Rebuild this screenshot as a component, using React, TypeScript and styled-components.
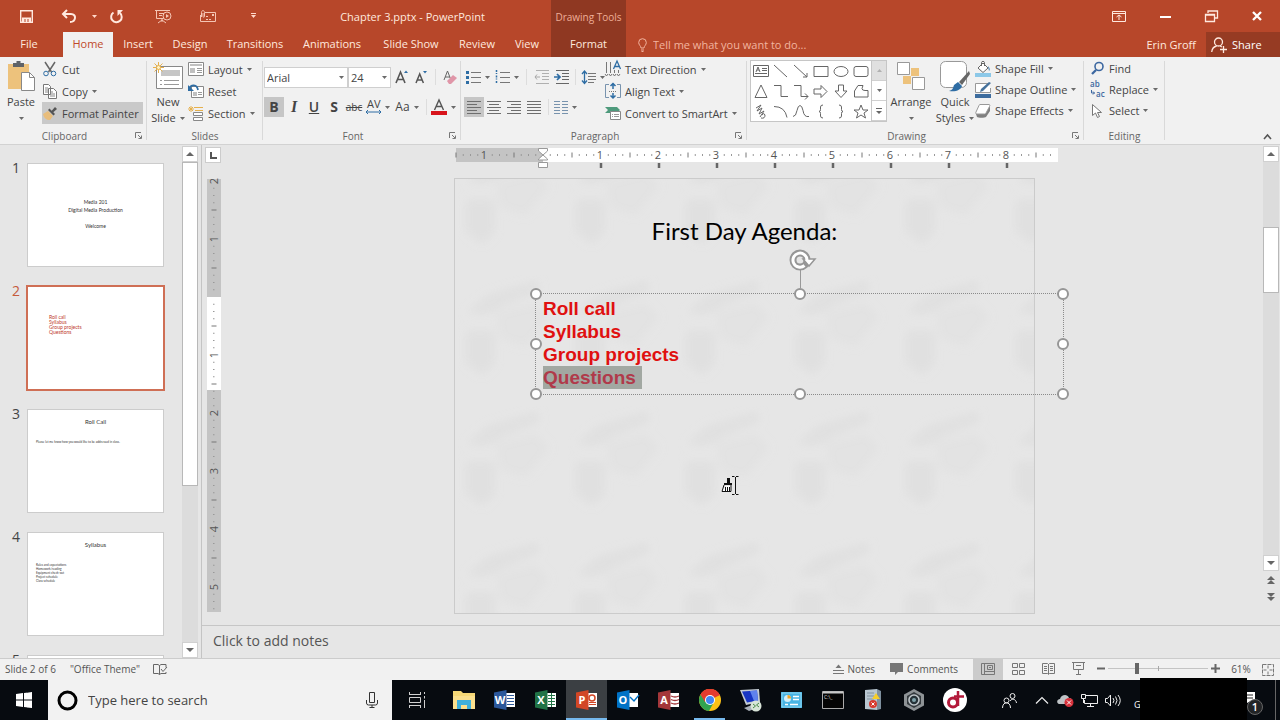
import { FC, ReactNode } from 'react';
import styled, { createGlobalStyle, css } from 'styled-components';

const GlobalStyle = createGlobalStyle`
  * { box-sizing: border-box; }
  body {
    margin: 0;
    font-family: 'Open Sans', 'Noto Sans', sans-serif;
    font-size: 11px;
    color: #444444;
    background: #e6e6e6;
  }
  button, input, select {
    font: inherit;
    color: inherit;
    margin: 0;
    padding: 0;
    border: 0;
    background: none;
  }
`;

const App = styled.div`
  display: flex;
  flex-direction: column;
  height: 100vh;
  min-width: 1200px;
  overflow: hidden;
`;

const Svg = styled.svg`
  display: block;
  flex: none;
  fill: none;
  stroke-width: 1;
  overflow: visible;
`;

interface IconProps {
  w: number;
  h: number;
  children: ReactNode;
}

const Icon: FC<IconProps> = ({ w, h, children }) => (
  <Svg width={w} height={h} viewBox={`0 0 ${w} ${h}`} aria-hidden="true">
    {children}
  </Svg>
);

const Caret: FC<{ color?: string }> = ({ color = '#6a6a6a' }) => (
  <Icon w={5} h={3}>
    <path d="M0 0h5L2.500 3z" fill={color} />
  </Icon>
);

/* ---------- header ---------- */

const Header = styled.header`
  display: flex;
  flex: none;
  height: 57px;
  background: #b7472a;
  color: #ffe9df;
`;
const HeaderLeft = styled.div`
  width: 551px;
`;
const HeaderRight = styled.div`
  flex: 1;
`;
const TitleRow = styled.div`
  display: flex;
  align-items: center;
  height: 32px;
`;
const QuickAccess = styled.div`
  display: grid;
  grid-template-columns: 52px 34px 17px 27px 66px 24px 66px;
  align-items: center;
  height: 32px;
`;
const BarButton = styled.button`
  display: flex;
  align-items: center;
  justify-content: center;
  height: 30px;
`;
const DocTitle = styled.div`
  flex: 1;
  padding-right: 12px;
  text-align: center;
`;
const TabRow = styled.nav`
  display: grid;
  grid-template-columns: 63px 50px 50px 54px 76px 78px 80px 52px 48px;
  height: 25px;
`;
const Tab = styled.button<{ $active?: boolean }>`
  height: 25px;
  padding-bottom: 2px;
  line-height: 23px;
  ${(p) => p.$active && css`
    background: #f1f1f1;
    color: #c0492b;
  `}
`;
const FileTab = styled(Tab)`
  padding-right: 5px;
`;
const ContextTab = styled.div`
  width: 75px;
  display: flex;
  flex-direction: column;
  background: #8f3822;
  text-align: center;
`;
const ContextLabel = styled.div`
  height: 32px;
  line-height: 34px;
  font-size: 10px;
  color: #eeae98;
  white-space: nowrap;
`;
const WindowControls = styled(TitleRow)`
  justify-content: flex-end;
`;
const WindowButton = styled(BarButton)`
  width: 46px;
`;
const TellRow = styled.div`
  display: flex;
  align-items: center;
  height: 25px;
`;
const TellMe = styled.label`
  display: flex;
  flex: 1;
  align-items: center;
  gap: 6px;
  padding-left: 12px;
`;
const TellInput = styled.input`
  flex: 1;
  outline: none;
  &::placeholder {
    color: #f2b49f;
    opacity: 1;
  }
`;
const UserName = styled.button`
  padding-right: 10px;
`;
const Share = styled.button`
  display: flex;
  align-items: center;
  gap: 5px;
  width: 74px;
  height: 25px;
  padding-left: 5px;
  background: #963b23;
  color: #ffffff;
`;

/* ---------- ribbon ---------- */

const Ribbon = styled.section`
  display: flex;
  flex: none;
  height: 88px;
  background: #f1f1f1;
  border-bottom: 1px solid #d2d2d2;
`;
const Group = styled.div<{ $w?: number }>`
  display: flex;
  flex-direction: column;
  ${(p) => (p.$w ? css`width: ${p.$w}px;` : css`flex: 1;`)}
`;
const GroupBody = styled.div<{ $pad?: number }>`
  display: flex;
  height: 70px;
  padding-top: 1px;
  padding-left: ${(p) => p.$pad ?? 0}px;
`;
const GroupFooter = styled.div<{ $launcher?: boolean }>`
  display: grid;
  grid-template-columns: ${(p) => (p.$launcher ? '1fr 18px' : '1fr')};
  align-items: center;
  justify-items: center;
  height: 17px;
  font-size: 10px;
  color: #666666;
`;
const GroupLine = styled.div`
  width: 1px;
  margin: 4px 0 4px -1px;
  background: #d9d9d9;
`;
const Column = styled.div`
  display: flex;
  flex-direction: column;
  align-items: flex-start;
`;
const BigButton = styled.button<{ $w: number }>`
  display: grid;
  grid-template-rows: 36px 16px 16px;
  align-items: center;
  justify-items: center;
  width: ${(p) => p.$w}px;
  height: 68px;
  line-height: 16px;
`;
const WithCaret = styled.span`
  display: flex;
  align-items: center;
  gap: 4px;
`;
const SmallButton = styled.button<{ $active?: boolean; $tight?: boolean }>`
  display: flex;
  align-items: center;
  gap: 4px;
  height: ${(p) => (p.$tight ? 21 : 22)}px;
  padding-right: 4px;
  white-space: nowrap;
  background: ${(p) => (p.$active ? '#c9c9c9' : 'none')};
`;
const IconSlot = styled.span<{ $w?: number }>`
  display: flex;
  justify-content: center;
  width: ${(p) => p.$w ?? 16}px;
`;
const Tools = styled.div`
  display: flex;
  flex-direction: column;
  gap: 10px;
  padding-top: 9px;
`;
const ToolRow = styled.div`
  display: flex;
  align-items: center;
  height: 20px;
`;
const Tool = styled.button<{ $w?: number; $active?: boolean }>`
  display: flex;
  align-items: center;
  justify-content: center;
  gap: 4px;
  flex: none;
  width: ${(p) => p.$w ?? 20}px;
  height: 20px;
  font-size: 12px;
  line-height: 20px;
  background: ${(p) => (p.$active ? '#c6c6c6' : 'none')};
`;
const Strong = styled.span`
  font-size: 14px;
  font-weight: 700;
`;
const Italic = styled.span`
  font-family: 'Liberation Serif', serif;
  font-size: 16px;
  font-style: italic;
  font-weight: 700;
`;
const Underline = styled(Strong)`
  font-weight: 600;
  text-decoration: underline;
`;
const Strike = styled.span`
  font-size: 10px;
  text-decoration: line-through;
`;
const ToolLine = styled.div`
  width: 1px;
  height: 16px;
  margin: 0 4px;
  background: #dddddd;
`;
const SelectBox = styled.div<{ $w: number }>`
  display: grid;
  grid-template-columns: 1fr 8px;
  align-items: center;
  width: ${(p) => p.$w}px;
  height: 21px;
  background: #ffffff;
  border: 1px solid #cfcfcf;
`;
const Select = styled.select`
  appearance: none;
  outline: none;
  width: 100%;
  padding-left: 2px;
  grid-row: 1;
  grid-column: 1 / 3;
`;
const SelectArrow = styled.span`
  grid-row: 1;
  grid-column: 2;
  pointer-events: none;
`;
const Gallery = styled.div`
  display: flex;
  width: 137px;
  height: 62px;
  margin: 2px 0 0 3px;
  background: #ffffff;
  border: 1px solid #c6c6c6;
`;
const ShapeGrid = styled.div`
  display: grid;
  grid-template-columns: repeat(6, 20px);
  grid-template-rows: repeat(3, 20px);
  flex: 1;
`;
const ShapeButton = styled.button`
  display: flex;
  align-items: center;
  justify-content: center;
`;
const GalleryScroll = styled.div`
  display: grid;
  grid-template-rows: repeat(3, 20px);
  width: 15px;
  border-left: 1px solid #c6c6c6;
`;
const GalleryButton = styled.button<{ $off?: boolean }>`
  display: flex;
  align-items: center;
  justify-content: center;
  background: ${(p) => (p.$off ? '#e0e0e0' : '#ffffff')};
  border-bottom: 1px solid #d0d0d0;
`;
const Collapse = styled.button`
  align-self: flex-end;
  margin-right: 8px;
`;

/* ---------- workspace ---------- */

const Workspace = styled.main`
  display: flex;
  flex: 1;
  min-height: 0;
`;
const SlidePane = styled.aside`
  display: flex;
  width: 202px;
  padding-right: 2px;
  border-right: 1px solid #c4c4c4;
`;
const SlideList = styled.ol`
  flex: 1;
  margin: 0;
  padding: 18px 0 0;
  list-style: none;
  overflow: hidden;
`;
const SlideItem = styled.li<{ $active?: boolean }>`
  display: grid;
  grid-template-columns: 27px 137px;
  height: 123px;
  font-size: 14px;
  line-height: 10px;
  color: ${(p) => (p.$active ? '#c55a3a' : '#444444')};
`;
const SlideNumber = styled.span`
  padding: 0 7px 0 0;
  text-align: right;
`;
const Thumb = styled.button<{ $active?: boolean }>`
  display: flex;
  flex-direction: column;
  height: 104px;
  background: #ffffff;
  outline: ${(p) => (p.$active ? '2px solid #cf6f55' : '1px solid #cccccc')};
  outline-offset: -1px;
  font-family: Lato, sans-serif;
  color: #333333;
`;
const CoverText = styled.span`
  width: 100%;
  padding-top: 35px;
  font-size: 5px;
  line-height: 8px;
  text-align: center;
`;
const RedText = styled.span`
  padding: 29px 0 0 22px;
  font-size: 5px;
  line-height: 5px;
  text-align: left;
  color: #c0392b;
`;
const ThumbTitle = styled.span`
  width: 100%;
  height: 30px;
  padding-top: 9px;
  font-size: 6px;
  line-height: 8px;
  text-align: center;
`;
const ThumbBody = styled.span`
  padding: 1px 0 0 9px;
  font-size: 3px;
  line-height: 4px;
  text-align: left;
`;
const ScrollBar = styled.div`
  display: flex;
  flex-direction: column;
  align-items: center;
  width: 18px;
  padding-top: 1px;
`;
const ScrollButton = styled.button`
  display: flex;
  align-items: center;
  justify-content: center;
  flex: none;
  width: 16px;
  height: 16px;
  background: #ffffff;
  border: 1px solid #d0d0d0;
`;
const Track = styled.div<{ $top: number }>`
  flex: 1;
  width: 16px;
  padding-top: ${(p) => p.$top}px;
  background: #dcdcdc;
`;
const TrackThumb = styled.div<{ $h: number }>`
  height: ${(p) => p.$h}px;
  background: #ffffff;
  border: 1px solid #b8b8b8;
`;
const PageButtons = styled.div`
  display: flex;
  flex-direction: column;
  align-items: center;
  height: 54px;
`;
const PageButton = styled.button`
  display: flex;
  align-items: center;
  height: 17px;
`;
const Editor = styled.div`
  display: flex;
  flex-direction: column;
  flex: 1;
  min-width: 0;
`;
const EditArea = styled.div`
  display: flex;
  flex: 1;
  min-height: 0;
`;
const RulerColumn = styled.div`
  display: flex;
  flex-direction: column;
  gap: 16px;
  width: 25px;
  padding: 2px 0 0 3px;
`;
const TabSelector = styled.button`
  display: flex;
  align-items: center;
  justify-content: center;
  width: 16px;
  height: 16px;
  background: #ffffff;
  border: 1px solid #cccccc;
`;
const VRulerBox = styled.div`
  padding-left: 2px;
`;
const Canvas = styled.div`
  display: flex;
  flex: 1;
  justify-content: center;
  padding-top: 3px;
`;
const CanvasInner = styled.div`
  width: 581px;
`;
const HRulerBox = styled.div`
  height: 30px;
  padding-left: 2px;
`;
const Slide = styled.div`
  position: relative;
  height: 436px;
  border: 1px solid #cbcbcb;
`;
const Watermark = styled.div`
  height: 434px;
  overflow: hidden;
`;
const SlideTitle = styled.h1`
  position: absolute;
  top: 37px;
  left: 0;
  right: 0;
  margin: 0;
  font-family: Lato, sans-serif;
  font-size: 24px;
  font-weight: 400;
  line-height: 30px;
  text-align: center;
  color: #000000;
`;
const TextBox = styled.div`
  position: absolute;
  top: 114px;
  left: 80px;
  width: 529px;
  height: 102px;
  padding: 3px 7px;
  font-family: 'Liberation Sans', Arial, sans-serif;
  font-size: 19px;
  font-weight: 700;
  line-height: 23px;
  color: #e01010;
  border: 1px dotted #8a8a8a;
`;
const Line = styled.div``;
const Selected = styled.span`
  display: inline-block;
  height: 23px;
  padding-right: 6px;
  background: #a2a8a2;
  color: #b03a4a;
`;
const Handle = styled.span<{ $x: number; $y: number }>`
  position: absolute;
  left: ${(p) => p.$x}%;
  top: ${(p) => p.$y}%;
  width: 12px;
  height: 12px;
  margin: -6px;
  background: #ffffff;
  border: 2px solid #969696;
  border-radius: 50%;
`;
const RotateHandle = styled.span`
  position: absolute;
  left: 50%;
  top: -45px;
  margin-left: -11px;
`;
const PainterCursor = styled.span`
  position: absolute;
  left: 266px;
  top: 297px;
`;
const Notes = styled.div`
  height: 33px;
  padding-left: 11px;
  border-top: 1px solid #c6c6c6;
  font-size: 14px;
  line-height: 30px;
  color: #555555;
`;

/* ---------- status bar ---------- */

const StatusBar = styled.footer`
  display: flex;
  align-items: center;
  flex: none;
  height: 22px;
  font-size: 10px;
  line-height: 14px;
  color: #555555;
  background: #f1f1f1;
  border-top: 1px solid #cccccc;
`;
const StatusText = styled.span`
  padding: 0 0 2px 5px;
  margin-right: 9px;
`;
const Spacer = styled.div`
  flex: 1;
`;
const StatusButton = styled.button`
  display: flex;
  align-items: center;
  gap: 4px;
  margin-right: 15px;
  padding-bottom: 2px;
`;
const SpellingButton = styled(StatusButton)`
  margin-left: 4px;
`;
const ViewButton = styled.button<{ $active?: boolean }>`
  display: flex;
  align-items: center;
  justify-content: center;
  width: 30px;
  height: 21px;
  padding-bottom: 2px;
  background: ${(p) => (p.$active ? '#cbcbcb' : 'none')};
`;
const Zoom = styled.div`
  display: flex;
  align-items: center;
  gap: 3px;
  margin-left: 4px;
  padding-bottom: 2px;
`;
const ZoomSlider = styled.input`
  appearance: none;
  width: 100px;
  height: 11px;
  background:
    linear-gradient(#a8a8a8, #a8a8a8) 50% 50% / 1px 5px no-repeat,
    linear-gradient(#c4c4c4, #c4c4c4) 0 50% / 100% 1px no-repeat;
  &::-webkit-slider-thumb {
    appearance: none;
    width: 4px;
    height: 11px;
    background: #666666;
  }
`;
const ZoomValue = styled.button`
  width: 42px;
  padding-bottom: 2px;
`;
const FitButton = styled.button`
  padding-right: 6px;
`;

/* ---------- taskbar ---------- */

const Taskbar = styled.footer`
  position: relative;
  display: flex;
  flex: none;
  height: 40px;
  background: #070b10;
  color: #ffffff;
`;
const TaskButton = styled.button<{ $w?: number; $state?: 'active' | 'open' }>`
  display: flex;
  align-items: center;
  justify-content: center;
  width: ${(p) => p.$w ?? 41}px;
  height: 40px;
  background: ${(p) => (p.$state === 'active' ? '#3b3f43' : 'none')};
  box-shadow: ${(p) => (p.$state === 'active' ? 'inset 0 -2px 0 #76b9ed' : 'none')};
  ${(p) => p.$state === 'open' && css`
    background: linear-gradient(#76b9ed, #76b9ed) 50% 100% / 31px 2px no-repeat;
  `}
`;
const Search = styled.label`
  display: flex;
  align-items: center;
  gap: 10px;
  width: 344px;
  padding: 0 14px 0 9px;
  background: #f2f2f2;
`;
const SearchInput = styled.input`
  flex: 1;
  outline: none;
  font-size: 13px;
  &::placeholder {
    color: #444444;
    opacity: 1;
  }
`;
const ClockButton = styled(TaskButton)`
  justify-content: flex-start;
  padding: 8px 0 0 9px;
  font-size: 9px;
`;
const Redacted = styled.div`
  position: absolute;
  top: -2px;
  right: 33px;
  width: 107px;
  height: 42px;
  background: #000000;
`;
const Tray = styled.div`
  display: flex;
  align-items: center;
`;
const TrayEnd = styled.button`
  width: 5px;
  height: 40px;
  border-left: 1px solid #666666;
`;
const Badge = styled.span`
  position: absolute;
  right: 17px;
  top: 19px;
  width: 16px;
  height: 16px;
  border: 1px solid #666666;
  border-radius: 50%;
  background: #222426;
  font-size: 11px;
  font-weight: 600;
  line-height: 14px;
  text-align: center;
`;
const ActionCenter = styled(TaskButton)`
  justify-content: flex-start;
  padding-bottom: 6px;
`;

const Launcher = () => (
  <button aria-label="More options">
    <Icon w={7} h={7}>
      <path d="M.500 6V.500H6M3 3l3 3M6.500 3.500v3h-3" stroke="#777" />
    </Icon>
  </button>
);

interface RibbonGroupProps {
  name: string;
  width: number;
  pad?: number;
  launcher?: boolean;
  children: ReactNode;
}

const RibbonGroup: FC<RibbonGroupProps> = ({ name, width, pad, launcher, children }) => (
  <>
    <Group $w={width}>
      <GroupBody $pad={pad}>{children}</GroupBody>
      <GroupFooter $launcher={launcher}>
        <span>{name}</span>
        {launcher && <Launcher />}
      </GroupFooter>
    </Group>
    <GroupLine />
  </>
);

interface CommandProps {
  label: string;
  icon: ReactNode;
  caret?: boolean;
  active?: boolean;
  tight?: boolean;
}

const Command: FC<CommandProps> = ({ label, icon, caret, active, tight }) => (
  <SmallButton $active={active} $tight={tight}>
    <IconSlot>{icon}</IconSlot>
    {label}
    {caret && <Caret />}
  </SmallButton>
);

const blue = '#2e6da4';
const gray = '#777777';

const PasteIcon = () => (
  <Icon w={28} h={32}>
    <path d="M1 4h21v25H1z" fill="#edc27c" />
    <path d="M6 3h3.500V1h4v2H17v4H6z" fill="#5f6368" />
    <path d="M14.500 12.500h8l5 5v13h-13z" fill="#fff" stroke="#888" />
    <path d="M22.500 12.500v5h5" stroke="#888" />
  </Icon>
);
const CutIcon = () => (
  <Icon w={14} h={15}>
    <path d="M2 0l6.500 10M12 0L5.500 10" stroke="#666" strokeWidth="1.500" />
    <circle cx="3" cy="11.500" r="2.300" stroke={blue} />
    <circle cx="10.500" cy="11.500" r="2.300" stroke={blue} />
  </Icon>
);
const CopyIcon = () => (
  <Icon w={14} h={15}>
    <path d="M.500.500h5l2 2v8h-7zM5.500 4.500h5l3 3v7h-8z" fill="#fff" stroke={gray} />
    <path d="M2 4h3M2 6h3M2 8h3M7 8h3M7 10h5M7 12h5" stroke="#888" />
  </Icon>
);
const PainterIcon = () => (
  <Icon w={14} h={13}>
    <path d="M0 7l5-3 5 5-3 4C3 13 1 11 0 7z" fill="#e8bd7c" />
    <path d="M5 3l5.500 5.500 1.500-1.500-1.700-1.700L14 2l-2-2-3.300 3.700L6.500 1.500z" fill="#555" />
  </Icon>
);
const NewSlideIcon = () => (
  <Icon w={31} h={29}>
    <path d="M3.500 4.500h26v22h-26z" fill="#fff" stroke="#888" />
    <path d="M8 8h19v6H8z" fill="#c6c6c6" />
    <path d="M7 18.500h2m2 0h15M7 22.500h2m2 0h15" stroke="#999" />
    <path d="M5.500 0v11M0 5.500h11M1.500 1.500l8 8M9.500 1.500l-8 8" stroke="#e6b04d" />
    <circle cx="5.500" cy="5.500" r="2" fill="#fff3c9" stroke="#e6b04d" />
  </Icon>
);
const LayoutIcon = () => (
  <Icon w={16} h={14}>
    <path d="M.500.500h15v13H.500z" fill="#fff" stroke="#888" />
    <path d="M2 2h12v2H2zM2 6h5v5H2z" fill="#c0c0c0" />
    <path d="M9 6.500h5M9 8.500h5M9 10.500h5" stroke="#999" />
  </Icon>
);
const ResetIcon = () => (
  <Icon w={16} h={14}>
    <path d="M3.500 2.500h12v11h-12z" fill="#fff" stroke="#888" />
    <path d="M5 8h4v4H5z" fill="#c0c0c0" />
    <path d="M10 8.500h4M10 10.500h4" stroke="#999" />
    <path d="M1 5c2-5 8-5 9 1" stroke={blue} strokeWidth="1.800" />
    <path d="M0 1v6h6z" fill={blue} />
  </Icon>
);
const SectionIcon = () => (
  <Icon w={16} h={15}>
    <path d="M3 0v6M0 3h6M1 1l4 4M5 1L1 5" stroke="#e6b04d" />
    <path d="M6 1.500h9M7 4.500h8" stroke="#e6b04d" />
    <path d="M5.500 6.500h9v3h-9zM5.500 11.500h9v3h-9z" fill="#fff" stroke="#888" />
  </Icon>
);
const ClearIcon = () => (
  <Icon w={14} h={14}>
    <path d="M1 10L4.500 1 8 10M2 7h5" stroke="#666" />
    <path d="M4 11l6-6 4 3-6 6H6z" fill="#e096a8" />
  </Icon>
);
const BulletsIcon = () => (
  <Icon w={15} h={14}>
    <path d="M0 1h3v3H0zM0 6h3v3H0zM0 11h3v3H0z" fill={blue} />
    <path d="M5 2.500h10M5 7.500h10M5 12.500h10" stroke={gray} />
  </Icon>
);
const NumbersIcon = () => (
  <Icon w={15} h={14}>
    <path d="M1.500 0v4M1.500 5.500v4M1.500 11v3" stroke={blue} strokeWidth="1.500" strokeDasharray="2 1" />
    <path d="M5 2.500h10M5 7.500h10M5 12.500h10" stroke={gray} />
  </Icon>
);
const OutdentIcon: FC<{ inward?: boolean }> = ({ inward }) => (
  <Icon w={15} h={14}>
    <path
      d="M2 .500h13M8 3.500h7M8 6.500h7M8 9.500h7M2 13.500h13"
      stroke={inward ? '#666' : '#b0b0b0'}
    />
    {inward ? (
      <path d="M0 7h5M3 4l3 3-3 3" stroke={blue} strokeWidth="1.700" />
    ) : (
      <path d="M1 7h5M3 4.500L1 7l2 2.500" stroke="#a8a8a8" />
    )}
  </Icon>
);
const SpacingIcon = () => (
  <Icon w={15} h={15}>
    <path d="M3.500 1v12M1 4l2.500-3L6 4M1 10.500l2.500 3 2.500-3" stroke={blue} strokeWidth="1.300" />
    <path d="M7 3.500h8M7 6.500h8M7 9.500h8M7 12.500h6" stroke={gray} />
  </Icon>
);
const alignments: Record<string, string> = {
  left: 'M0 .500h14M0 3.500h10M0 6.500h14M0 9.500h10M0 12.500h14',
  center: 'M0 .500h14M2 3.500h10M0 6.500h14M2 9.500h10M0 12.500h14',
  right: 'M0 .500h14M4 3.500h10M0 6.500h14M4 9.500h10M0 12.500h14',
  justify: 'M0 .500h14M0 3.500h14M0 6.500h14M0 9.500h14M0 12.500h14',
};
const AlignIcon: FC<{ kind: string }> = ({ kind }) => (
  <Icon w={14} h={13}>
    <path d={alignments[kind]} stroke="#6e6e6e" />
  </Icon>
);
const ColumnsIcon = () => (
  <Icon w={14} h={13}>
    <path d="M0 .500h6M0 3.500h6M0 6.500h6M0 9.500h6M0 12.500h6" stroke="#7893ae" />
    <path d="M8 .500h6M8 3.500h6M8 6.500h6M8 9.500h6M8 12.500h6" stroke="#7893ae" />
  </Icon>
);
const TextDirectionIcon = () => (
  <Icon w={16} h={16}>
    <path d="M1.500 1v11M5.500 1v11M9.500 9v3M13.500 9v3" stroke={gray} />
    <path d="M0 13l1.500 2L3 13M4 13l1.500 2L7 13M8 13l1.500 2 1.500-2M12 13l1.500 2 1.500-2" stroke={gray} />
    <path d="M8.500 8L12 0l3.500 8M9.500 5.500h5" stroke={blue} strokeWidth="1.300" />
  </Icon>
);
const AlignTextIcon = () => (
  <Icon w={16} h={16}>
    <path d="M4 1.500H.500v13H4M12 1.500h3.500v13H12" stroke="#7893ae" />
    <path d="M8 0v6M5.500 3L8 .500 10.500 3M8 10v5M5.500 12.500L8 15l2.500-2.500" stroke={blue} strokeWidth="1.500" />
    <path d="M4 8.500h8" stroke={gray} strokeDasharray="1 1" />
  </Icon>
);
const SmartArtIcon = () => (
  <Icon w={16} h={14}>
    <path d="M0 1h12l3 3-3 3H0l3-3z" fill="#4e9a7c" />
    <path d="M5.500 5.500h10v8h-10z" fill="#fff" stroke="#888" />
    <path d="M7 8.500h1m1 0h5M7 10.500h1m1 0h5" stroke="#999" />
  </Icon>
);
const ArrangeIcon = () => (
  <Icon w={28} h={28}>
    <path d="M14 6h8v8h-8zM6 14h8v8H6z" fill="#edc27c" />
    <path d="M.500.500h12v12H.500zM15.500 15.500h12v12h-12z" fill="#fff" stroke="#999" />
  </Icon>
);
const StylesIcon = () => (
  <Icon w={30} h={31}>
    <rect x=".500" y=".500" width="26" height="26" rx="5" fill="#fff" stroke="#999" />
    <path d="M29 10l-10 11 3 3 8-11z" fill="#666" />
    <path d="M18 21l4 4c-1 4-6 6-13 5 4-1 4-3 5-6z" fill={blue} />
  </Icon>
);
const FillIcon = () => (
  <Icon w={16} h={16}>
    <path d="M0 12h16v4H0z" fill="#8cc8e8" />
    <path d="M3 7l5-5 5 5-5 4.500z" fill="#fff" stroke="#666" />
    <path d="M6.500 5V1.500C6.500 0 9.500 0 9.500 1.500V5" stroke="#666" />
    <path d="M13 5c2 2 2 4 1 5z" fill={blue} />
  </Icon>
);
const OutlineIcon = () => (
  <Icon w={16} h={16}>
    <path d="M0 12h16v4H0z" fill="#3d6c9e" />
    <path d="M13 1.500H.500v9h15V6" fill="#fff" stroke="#999" />
    <path d="M5 10l1-3 8-7 2 1-8 8z" fill="#46729c" />
  </Icon>
);
const EffectsIcon = () => (
  <Icon w={16} h={14}>
    <path d="M1 10l1 3c1 1 8 1 9 0l4-6V2L10 9z" fill="#808080" />
    <path d="M5 .500h9c1 0 1 1 .500 2L11 9c-.500 1-1 1-2 1H2C.500 10 .500 9 1 8l3-6.500C4.400.700 4.500.500 5 .500z" fill="#fff" stroke="#999" />
  </Icon>
);
const FindIcon = () => (
  <Icon w={13} h={13}>
    <circle cx="8" cy="4.500" r="4" stroke="#3c67a0" strokeWidth="1.600" />
    <path d="M5 8L1 12" stroke="#3c67a0" strokeWidth="2.300" />
  </Icon>
);
const ReplaceIcon = () => (
  <Svg width={15} height={15} viewBox="0 0 15 15" aria-hidden="true" fontSize="8" fontWeight="600">
    <text x="0" y="5" fill="#3c67a0">ab</text>
    <text x="6" y="15" fill="#3c67a0">ac</text>
    <path d="M1.500 8v3h3M3 9.500L4.500 11 3 12.500" stroke="#3c67a0" />
  </Svg>
);
const SelectIcon = () => (
  <Icon w={10} h={14}>
    <path d="M.500.500v11l3-2.500 2 4.500 2-1-2-4h4z" fill="#fff" stroke="#777" />
  </Icon>
);

const shapes: { name: string; d: string }[] = [
  { name: 'Text Box', d: 'M.500 1.500h15v11h-15zM3 8l2-5 2 5M4 6h2M9 4.500h5M9 6.500h5M2 9.500h12' },
  { name: 'Line', d: 'M1 1l13 12' },
  { name: 'Arrow', d: 'M1 1l13 12M14 9v4h-4' },
  { name: 'Rectangle', d: 'M1 2.500h14v10H1z' },
  { name: 'Oval', d: 'M1 7.500a7 5 0 1 0 14 0a7 5 0 1 0-14 0z' },
  { name: 'Rounded Rectangle', d: 'M3 2.500h10q2 0 2 2v6q0 2-2 2H3q-2 0-2-2v-6q0-2 2-2z' },
  { name: 'Triangle', d: 'M8 1l6 12.500H2z' },
  { name: 'Elbow', d: 'M1 1.500h7v11h7' },
  { name: 'Elbow Arrow', d: 'M1 1.500h7v11h7M12 9.500l3 3-3 3' },
  { name: 'Right Arrow', d: 'M1 5h7V1.500l6 6-6 6V10H1z' },
  { name: 'Down Arrow', d: 'M5.500 1h5v6H14l-6 6.500L2 7h3.500z' },
  { name: 'Freeform', d: 'M5 1.500h5l-1 3q0 2 3 2h3v6.500H1.500V7z' },
  { name: 'Scribble', d: 'M3 4L8 1 4 7l5-3-3 6 5-3-4 6M8 14q4 1 4-3-1-3-3 0' },
  { name: 'Arc', d: 'M1 2.500q11 0 13 11' },
  { name: 'Curve', d: 'M0 12.500q3 0 4-6 1-5 3-5t3 5q1 7 6 6' },
  { name: 'Left Brace', d: 'M10 1Q7.500 1 7.500 3v2.500Q7.500 7.500 6 7.500q1.500 0 1.500 2V12q0 2 2.500 2' },
  { name: 'Right Brace', d: 'M6 1q2.500 0 2.500 2v2.500q0 2 1.500 2-1.500 0-1.500 2V12q0 2-2.500 2' },
  { name: 'Star', d: 'M8 1l2 5h5l-4 3 1.500 5L8 11l-4.500 3L5 9 1 6h5z' },
];

const minor = (from: number, to: number, origin: number) => {
  const out: { pos: number; half: boolean }[] = [];
  for (let i = Math.ceil(((from - origin) * 8) / 58); origin + (i * 58) / 8 <= to; i++) {
    if (i % 8 !== 0) out.push({ pos: origin + (i * 58) / 8, half: i % 4 === 0 });
  }
  return out;
};

const HorizontalRuler = () => (
  <Svg width={602} height={20} viewBox="0 0 602 20" role="img" aria-label="Horizontal ruler" fontSize="11">
    <path d="M0 0h87v14H0z" fill="#c4c4c4" />
    <path d="M87 0h515v14H87z" fill="#ffffff" />
    {minor(0, 600, 87).map((t) => (
      <path key={t.pos} d={t.half ? `M${t.pos} 4.500v5` : `M${t.pos} 6v2`} stroke={t.half ? '#777' : '#999'} />
    ))}
    {[-1, 1, 2, 3, 4, 5, 6, 7, 8].map((n) => (
      <text key={n} x={86 + n * 58} y={11} textAnchor="middle" fill="#555">
        {Math.abs(n)}
      </text>
    ))}
    {[1, 2, 3, 4, 5, 6, 7, 8].map((n) => (
      <path key={n} d={`M${87 + n * 58} 15v5`} stroke="#666" strokeWidth="2.500" />
    ))}
    <path d="M82.500.500h9V3L87 7l-4.500-4zM87 7l4.500 4v1h-9v-1zM82.500 14.500h9v5h-9z" fill="#fff" stroke="#999" />
  </Svg>
);

const VerticalRuler = () => (
  <Svg width={14} height={433} viewBox="0 0 14 433" role="img" aria-label="Vertical ruler" fontSize="11">
    <path d="M0 0h14v433H0z" fill="#c4c4c4" />
    <path d="M0 118h14v93H0z" fill="#ffffff" />
    {minor(4, 430, 118).map((t) => (
      <path key={t.pos} d={t.half ? `M4.500 ${t.pos}h5` : `M6 ${t.pos}h1.500`} stroke={t.half ? '#777' : '#999'} />
    ))}
    {[-2, -1, 1, 2, 3, 4, 5].map((n) => (
      <text
        key={n}
        x={0}
        y={0}
        transform={`translate(11 ${118 + n * 58}) rotate(-90)`}
        textAnchor="middle"
        fill="#555"
      >
        {Math.abs(n)}
      </text>
    ))}
  </Svg>
);

const Backdrop = () => (
  <Svg width="100%" height="434" aria-hidden="true">
    <defs>
      <filter id="soft" x="-20%" y="-20%" width="140%" height="140%">
        <feGaussianBlur stdDeviation="5" />
      </filter>
      <pattern id="cloud" width="110" height="131" patternUnits="userSpaceOnUse" x="3" y="96">
        <g fill="#dcdcdc" fillOpacity="0.600" filter="url(#soft)">
          <path d="M8 38l22-18 50-14 2 9-30 12-24 12z" />
          <path d="M8 56h28v32l-12 12-16-12z" />
          <path d="M38 38l40-10 14 14-24 30-26-8z" fillOpacity="0.350" />
        </g>
      </pattern>
    </defs>
    <rect width="100%" height="434" fill="url(#cloud)" />
  </Svg>
);

interface OfficeIconProps {
  letter: string;
  color: string;
  children: ReactNode;
}

const OfficeIcon: FC<OfficeIconProps> = ({ letter, color, children }) => (
  <Svg width={22} height={20} viewBox="0 0 22 20" aria-hidden="true">
    <path d="M11 3h10v14H11z" fill="#fff" />
    {children}
    <path d="M0 2.500L12.500 0v20L0 17.500z" fill={color} />
    <text x="6" y="14" textAnchor="middle" fill="#fff" fontSize="11" fontWeight="700">{letter}</text>
  </Svg>
);

const tabs = ['Insert', 'Design', 'Transitions', 'Animations', 'Slide Show', 'Review', 'View'];

const TopBar = () => (
  <Header>
    <HeaderLeft>
      <TitleRow>
        <QuickAccess>
          <BarButton aria-label="Save">
            <Icon w={13} h={13}>
              <path d="M.700.700h11.600v11.600H.700z" stroke="#ffe9df" strokeWidth="1.400" />
              <path d="M2 7.500h9V12H2z" fill="#ffe9df" />
              <path d="M5 9v3M8 9v3" stroke="#b7472a" />
            </Icon>
          </BarButton>
          <BarButton aria-label="Undo">
            <Icon w={14} h={13}>
              <path d="M1 4h8c6 0 5 8-1 8M5 0L1 4l4 4" stroke="#ffe9df" strokeWidth="2" />
            </Icon>
          </BarButton>
          <BarButton aria-label="Undo history"><Caret color="#ffd9cb" /></BarButton>
          <BarButton aria-label="Repeat">
            <Icon w={13} h={13}>
              <path d="M3.500 2.500A5.300 5.300 0 1 0 10 3" stroke="#ffe9df" strokeWidth="2" />
              <path d="M7.500 0H13L7.500 6z" fill="#ffe9df" />
            </Icon>
          </BarButton>
          <BarButton aria-label="Start From Beginning">
            <Icon w={17} h={15}>
              <path d="M0 1.500h15M1.500 2v7.500h7M4 4.500h5M4 6.500h3M7 10v3M3 14l4-3 4 3" stroke="#f5c5b4" />
              <circle cx="12" cy="7" r="4" stroke="#f5c5b4" />
              <path d="M11 5v4l3-2z" fill="#f5c5b4" />
            </Icon>
          </BarButton>
          <BarButton aria-label="Email">
            <Icon w={16} h={13}>
              <path d="M5 2.500h10.500v9H.500V5M1.500 7V2.500C1.500 0 4.500 0 4.500 2.500v4c0 1-1.500 1-1.500 0V3" stroke="#f5c5b4" />
              <path d="M12 4h2v2h-2z" fill="#f5c5b4" />
              <path d="M6 6.500h3M6 9.500h6" stroke="#f5c5b4" strokeDasharray="2 1" />
            </Icon>
          </BarButton>
          <BarButton aria-label="Customize Quick Access Toolbar">
            <Icon w={5} h={6}>
              <path d="M0 .500h5" stroke="#ffd9cb" />
              <path d="M0 2h5L2.500 5z" fill="#ffd9cb" />
            </Icon>
          </BarButton>
        </QuickAccess>
        <DocTitle>Chapter 3.pptx - PowerPoint</DocTitle>
      </TitleRow>
      <TabRow>
        <FileTab>File</FileTab>
        <Tab $active>Home</Tab>
        {tabs.map((t) => (
          <Tab key={t}>{t}</Tab>
        ))}
      </TabRow>
    </HeaderLeft>
    <ContextTab>
      <ContextLabel>Drawing Tools</ContextLabel>
      <Tab>Format</Tab>
    </ContextTab>
    <HeaderRight>
      <WindowControls>
        <WindowButton aria-label="Ribbon Display Options">
          <Icon w={14} h={11}>
            <path d="M.500.500h13v10H.500zM0 2.500h14M7 9V4M4.500 6L7 4l2.500 2" stroke="#ffe9df" />
          </Icon>
        </WindowButton>
        <WindowButton aria-label="Minimize">
          <Icon w={11} h={3}><path d="M0 2h11" stroke="#fff" strokeWidth="2" /></Icon>
        </WindowButton>
        <WindowButton aria-label="Restore">
          <Icon w={13} h={12}>
            <path d="M3 3V1h9.500v7H10M.500 4.500h9v7h-9zM0 5h10" stroke="#ffe9df" strokeWidth="1.300" />
          </Icon>
        </WindowButton>
        <WindowButton aria-label="Close">
          <Icon w={10} h={10}><path d="M1 1l8 8M9 1L1 9" stroke="#fff" strokeWidth="2.300" /></Icon>
        </WindowButton>
      </WindowControls>
      <TellRow>
        <TellMe>
          <Icon w={9} h={14}>
            <path d="M3 10C3 8 .700 7 .700 4.500a3.800 3.800 0 0 1 7.600 0C8.300 7 6 8 6 10zM3 12h3M3.500 13.500h2" stroke="#f2b49f" />
          </Icon>
          <TellInput aria-label="Tell me" placeholder="Tell me what you want to do..." />
        </TellMe>
        <UserName>Erin Groff</UserName>
        <Share>
          <Icon w={16} h={16}>
            <circle cx="7.500" cy="5" r="4" stroke="#ffe9df" strokeWidth="1.300" />
            <path d="M.700 15c.500-4 2.500-5.500 5-6M9 9l2 1M12.500 9v7M9 12.500h7" stroke="#ffe9df" strokeWidth="1.300" />
          </Icon>
          Share
        </Share>
      </TellRow>
    </HeaderRight>
  </Header>
);

const RibbonBar = () => (
  <Ribbon>
    <RibbonGroup name="Clipboard" width={147} launcher>
      <BigButton $w={42}>
        <PasteIcon />
        Paste
        <Caret />
      </BigButton>
      <Column>
        <Command label="Cut" icon={<CutIcon />} />
        <Command label="Copy" icon={<CopyIcon />} caret />
        <Command label="Format Painter" icon={<PainterIcon />} active />
      </Column>
    </RibbonGroup>
    <RibbonGroup name="Slides" width={116} pad={1}>
      <BigButton $w={40}>
        <NewSlideIcon />
        New
        <WithCaret>Slide <Caret /></WithCaret>
      </BigButton>
      <Column>
        <Command label="Layout" icon={<LayoutIcon />} caret />
        <Command label="Reset" icon={<ResetIcon />} />
        <Command label="Section" icon={<SectionIcon />} caret />
      </Column>
    </RibbonGroup>
    <RibbonGroup name="Font" width={198} pad={1} launcher>
      <Tools>
        <ToolRow>
          <SelectBox $w={84}>
            <Select aria-label="Font" defaultValue="Arial"><option>Arial</option></Select>
            <SelectArrow><Caret /></SelectArrow>
          </SelectBox>
          <SelectBox $w={43}>
            <Select aria-label="Font size" defaultValue="24"><option>24</option></Select>
            <SelectArrow><Caret /></SelectArrow>
          </SelectBox>
          <Tool aria-label="Increase Font Size">
            <Icon w={13} h={14}>
              <path d="M1 13L5.500 2 10 13M2.500 9.500h6" stroke="#555" strokeWidth="1.600" />
              <path d="M9 3l2-2.500L13 3z" fill={blue} />
            </Icon>
          </Tool>
          <Tool aria-label="Decrease Font Size">
            <Icon w={13} h={14}>
              <path d="M1 13L4.700 4l3.700 9M2.500 10h4.500" stroke="#555" strokeWidth="1.500" />
              <path d="M8 1h4l-2 2.500z" fill={blue} />
            </Icon>
          </Tool>
          <ToolLine />
          <Tool aria-label="Clear All Formatting"><ClearIcon /></Tool>
        </ToolRow>
        <ToolRow>
          <Tool $active aria-label="Bold"><Strong>B</Strong></Tool>
          <Tool aria-label="Italic"><Italic>I</Italic></Tool>
          <Tool aria-label="Underline"><Underline>U</Underline></Tool>
          <Tool aria-label="Shadow"><Strong>S</Strong></Tool>
          <Tool aria-label="Strikethrough"><Strike>abc</Strike></Tool>
          <Tool $w={28} aria-label="Character Spacing">
            <Svg width={15} height={14} viewBox="0 0 15 14" fontSize="11">
              <text x="1" y="8" fill="#444">AV</text>
              <path d="M0 12h15M2 10l-2 2 2 2M13 10l2 2-2 2" stroke={blue} />
            </Svg>
            <Caret />
          </Tool>
          <Tool $w={30} aria-label="Change Case">Aa <Caret /></Tool>
          <ToolLine />
          <Tool $w={24} aria-label="Font Color">
            <Icon w={16} h={16}>
              <path d="M3.500 11L8 1l4.500 10M5 7.500h6" stroke="#555" strokeWidth="1.400" />
              <path d="M0 12h16v4H0z" fill="#d8141c" />
            </Icon>
            <Caret />
          </Tool>
        </ToolRow>
      </Tools>
    </RibbonGroup>
    <RibbonGroup name="Paragraph" width={286} pad={3} launcher>
      <Tools>
        <ToolRow>
          <Tool $w={28} aria-label="Bullets"><BulletsIcon /><Caret /></Tool>
          <Tool $w={30} aria-label="Numbering"><NumbersIcon /><Caret /></Tool>
          <ToolLine />
          <Tool aria-label="Decrease List Level"><OutdentIcon /></Tool>
          <Tool aria-label="Increase List Level"><OutdentIcon inward /></Tool>
          <ToolLine />
          <Tool $w={25} aria-label="Line Spacing"><SpacingIcon /><Caret /></Tool>
        </ToolRow>
        <ToolRow>
          <Tool $active aria-label="Align Left"><AlignIcon kind="left" /></Tool>
          <Tool aria-label="Center"><AlignIcon kind="center" /></Tool>
          <Tool aria-label="Align Right"><AlignIcon kind="right" /></Tool>
          <Tool aria-label="Justify"><AlignIcon kind="justify" /></Tool>
          <ToolLine />
          <Tool $w={24} aria-label="Columns"><ColumnsIcon /><Caret /></Tool>
        </ToolRow>
      </Tools>
      <Column>
        <Command label="Text Direction" icon={<TextDirectionIcon />} caret />
        <Command label="Align Text" icon={<AlignTextIcon />} caret />
        <Command label="Convert to SmartArt" icon={<SmartArtIcon />} caret />
      </Column>
    </RibbonGroup>
    <RibbonGroup name="Drawing" width={337} launcher>
      <Gallery>
        <ShapeGrid>
          {shapes.map((s) => (
            <ShapeButton key={s.name} aria-label={s.name}>
              <Icon w={16} h={15}><path d={s.d} stroke="#666" /></Icon>
            </ShapeButton>
          ))}
        </ShapeGrid>
        <GalleryScroll>
          <GalleryButton $off aria-label="Previous row">
            <Icon w={5} h={3}><path d="M0 3h5L2.500 0z" fill="#b0b0b0" /></Icon>
          </GalleryButton>
          <GalleryButton aria-label="Next row"><Caret /></GalleryButton>
          <GalleryButton aria-label="More shapes">
            <Icon w={6} h={6}>
              <path d="M0 .500h6" stroke="#666" />
              <path d="M0 3h6L3 6z" fill="#666" />
            </Icon>
          </GalleryButton>
        </GalleryScroll>
      </Gallery>
      <BigButton $w={48}>
        <ArrangeIcon />
        Arrange
        <Caret />
      </BigButton>
      <BigButton $w={40}>
        <StylesIcon />
        Quick
        <WithCaret>Styles <Caret /></WithCaret>
      </BigButton>
      <Column>
        <Command tight label="Shape Fill" icon={<FillIcon />} caret />
        <Command tight label="Shape Outline" icon={<OutlineIcon />} caret />
        <Command tight label="Shape Effects" icon={<EffectsIcon />} caret />
      </Column>
    </RibbonGroup>
    <RibbonGroup name="Editing" width={81} pad={5}>
      <Column>
        <Command tight label="Find" icon={<FindIcon />} />
        <Command tight label="Replace" icon={<ReplaceIcon />} caret />
        <Command tight label="Select" icon={<SelectIcon />} caret />
      </Column>
    </RibbonGroup>
    <Group>
      <GroupBody />
      <Collapse aria-label="Collapse the Ribbon">
        <Icon w={9} h={14}><path d="M1 12l3.500-4L8 12" stroke="#555" strokeWidth="1.600" /></Icon>
      </Collapse>
    </Group>
  </Ribbon>
);

const ArrowUp = () => <Icon w={8} h={4}><path d="M0 4h8L4 0z" fill="#666" /></Icon>;
const ArrowDown = () => <Icon w={8} h={4}><path d="M0 0h8L4 4z" fill="#666" /></Icon>;

const SlidesPanel = () => (
  <SlidePane>
    <SlideList>
      <SlideItem>
        <SlideNumber>1</SlideNumber>
        <Thumb>
          <CoverText>Media 201<br />Digital Media Production<br /><br />Welcome</CoverText>
        </Thumb>
      </SlideItem>
      <SlideItem $active>
        <SlideNumber>2</SlideNumber>
        <Thumb $active>
          <RedText>Roll call<br />Syllabus<br />Group projects<br />Questions</RedText>
        </Thumb>
      </SlideItem>
      <SlideItem>
        <SlideNumber>3</SlideNumber>
        <Thumb>
          <ThumbTitle>Roll Call</ThumbTitle>
          <ThumbBody>Please let me know how you would like to be addressed in class.</ThumbBody>
        </Thumb>
      </SlideItem>
      <SlideItem>
        <SlideNumber>4</SlideNumber>
        <Thumb>
          <ThumbTitle>Syllabus</ThumbTitle>
          <ThumbBody>
            Rules and expectations<br />Homework/reading<br />Equipment check-out<br />Project schedule<br />Class schedule
          </ThumbBody>
        </Thumb>
      </SlideItem>
      <SlideItem>
        <SlideNumber>5</SlideNumber>
        <Thumb aria-label="Slide 5" />
      </SlideItem>
    </SlideList>
    <ScrollBar>
      <ScrollButton aria-label="Scroll up"><ArrowUp /></ScrollButton>
      <Track $top={0}><TrackThumb $h={324} /></Track>
      <ScrollButton aria-label="Scroll down"><ArrowDown /></ScrollButton>
    </ScrollBar>
  </SlidePane>
);

const handles = [[0, 0], [50, 0], [100, 0], [0, 50], [100, 50], [0, 100], [50, 100], [100, 100]];

const EditorPanel = () => (
  <Editor>
    <EditArea>
      <RulerColumn>
        <TabSelector aria-label="Tab type">
          <Icon w={7} h={7}><path d="M1 0v6h6" stroke="#555" strokeWidth="2" /></Icon>
        </TabSelector>
        <VRulerBox><VerticalRuler /></VRulerBox>
      </RulerColumn>
      <Canvas>
        <CanvasInner>
          <HRulerBox><HorizontalRuler /></HRulerBox>
          <Slide>
            <Watermark><Backdrop /></Watermark>
            <SlideTitle>First Day Agenda:</SlideTitle>
            <TextBox>
              <Line>Roll call</Line>
              <Line>Syllabus</Line>
              <Line>Group projects</Line>
              <Line><Selected>Questions</Selected></Line>
              <RotateHandle>
                <Icon w={26} h={39}>
                  <path d="M11.500 21v18" stroke="#999" />
                  <circle cx="11" cy="11" r="7" fill="#e6e6e6" stroke="#969696" strokeWidth="7" />
                  <path d="M14 10h12l-6 7z" fill="#fff" stroke="#969696" strokeWidth="1.500" />
                  <path d="M15.500 16.500A7 7 0 1 1 18 11" stroke="#fff" strokeWidth="3" />
                </Icon>
              </RotateHandle>
              {handles.map(([x, y]) => (
                <Handle key={`${x}-${y}`} $x={x} $y={y} />
              ))}
            </TextBox>
            <PainterCursor>
              <Icon w={18} h={19}>
                <path d="M5 10h4l2 6H0z" fill="#fff" />
                <path d="M6 2h3v5H6zM3 7h8v2H3z" fill="#111" />
                <path d="M3 9l-2 6.500h9V9M4.500 11v4M6.500 11v4M8.500 11v4" stroke="#111" />
                <path d="M11 .500h2.500M15 .500h2.500M14.500 1v17M11 18.500h2.500M15 18.500h2.500" stroke="#111" />
              </Icon>
            </PainterCursor>
          </Slide>
        </CanvasInner>
      </Canvas>
      <ScrollBar>
        <ScrollButton aria-label="Scroll up"><ArrowUp /></ScrollButton>
        <Track $top={65}><TrackThumb $h={66} /></Track>
        <ScrollButton aria-label="Scroll down"><ArrowDown /></ScrollButton>
        <PageButtons>
          <PageButton aria-label="Previous slide">
            <Icon w={8} h={8}><path d="M0 4h8L4 0zM0 8h8L4 4z" fill="#666" /></Icon>
          </PageButton>
          <PageButton aria-label="Next slide">
            <Icon w={8} h={8}><path d="M0 0h8L4 4zM0 4h8L4 8z" fill="#666" /></Icon>
          </PageButton>
        </PageButtons>
      </ScrollBar>
    </EditArea>
    <Notes>Click to add notes</Notes>
  </Editor>
);

const Status = () => (
  <StatusBar>
    <StatusText>Slide 2 of 6</StatusText>
    <StatusText>"Office Theme"</StatusText>
    <SpellingButton aria-label="Spelling">
      <Icon w={14} h={12}>
        <path d="M6.500 11.500L5 10.500H.500v-9H5l1.500 1 1.500-1h5v3M6.500 2.500v9l1.500-1h5V9M8 6l2 2.500L14 4" stroke="#666" />
      </Icon>
    </SpellingButton>
    <Spacer />
    <StatusButton>
      <Icon w={11} h={10}>
        <path d="M2.500 4h6l-3-3.500z" fill="#777" />
        <path d="M0 6.500h11M0 9.500h11" stroke="#777" />
      </Icon>
      Notes
    </StatusButton>
    <StatusButton>
      <Icon w={13} h={12}><path d="M0 0h13v9H8l-3 3V9H0z" fill="#777" /></Icon>
      Comments
    </StatusButton>
    <ViewButton $active aria-label="Normal view">
      <Icon w={14} h={12}>
        <path d="M.500.500h13v11H.500zM3.500 1v11M4 8.500h9.500M6.500 2.500h5v4h-5zM8 4.500h2" stroke="#777" />
      </Icon>
    </ViewButton>
    <ViewButton aria-label="Slide Sorter">
      <Icon w={13} h={12}>
        <path d="M.500.500h5v4h-5zM7.500.500h5v4h-5zM.500 7.500h5v4h-5zM7.500 7.500h5v4h-5z" stroke="#777" />
      </Icon>
    </ViewButton>
    <ViewButton aria-label="Reading View">
      <Icon w={13} h={12}>
        <path d="M.500.500h5l1 1 1-1h5v10h-5l-1 1-1-1h-5zM6.500 1v10M2 3.500h3M2 5.500h3M2 7.500h3M8 3.500h3M8 5.500h3M8 7.500h3" stroke="#777" />
      </Icon>
    </ViewButton>
    <ViewButton aria-label="Slide Show view">
      <Icon w={13} h={13}>
        <path d="M0 .500h13M1.500 1v6.500h10V1M4 3.500h5M6.500 8v4M4 12.500h5" stroke="#777" />
      </Icon>
    </ViewButton>
    <Zoom>
      <button aria-label="Zoom out"><Icon w={8} h={9}><path d="M0 4.500h8" stroke="#666" strokeWidth="2" /></Icon></button>
      <ZoomSlider type="range" min={0} max={100} defaultValue={28} aria-label="Zoom" />
      <button aria-label="Zoom in"><Icon w={9} h={9}><path d="M0 4.500h9M4.500 0v9" stroke="#666" strokeWidth="2" /></Icon></button>
    </Zoom>
    <ZoomValue>61%</ZoomValue>
    <FitButton aria-label="Fit slide to window">
      <Icon w={12} h={12}>
        <path d="M.500.500h11v11H.500zM6 1.500v3M6 7.500v3M1.500 6h3M7.500 6h3" stroke="#777" strokeDasharray="4 1" />
      </Icon>
    </FitButton>
  </StatusBar>
);

const TaskBar = () => (
  <Taskbar>
    <TaskButton $w={48} aria-label="Start">
      <Icon w={16} h={16}>
        <path d="M0 2l7-1v6.500H0zM8 1l8-1v7.500H8zM0 8.500h7V15l-7-1zM8 8.500h8V16l-8-1z" fill="#fff" />
      </Icon>
    </TaskButton>
    <Search>
      <Icon w={21} h={21}><circle cx="10.500" cy="10.500" r="8.500" stroke="#000" strokeWidth="3" /></Icon>
      <SearchInput aria-label="Search" placeholder="Type here to search" />
      <Icon w={12} h={16}>
        <path d="M3.500.500h5v10h-5zM.500 8v3q0 2 2 2h7q2 0 2-2V8M6 13v2.500M3.500 15.500h5" stroke="#333" />
      </Icon>
    </Search>
    <TaskButton $w={51} aria-label="Task View">
      <Icon w={17} h={16}>
        <path d="M.500 0v3M11.500 0v3M1 2.500h10M.500 5.500h11v5H.500zM1 13.500h10M.500 13v3M11.500 13v3M15.500 0v2M15.500 4v2.500M15.500 8v8" stroke="#d0d0d0" />
      </Icon>
    </TaskButton>
    <TaskButton aria-label="File Explorer">
      <Icon w={22} h={18}>
        <path d="M0 0h8l2 2h12v16H0z" fill="#f6d876" />
        <path d="M0 5h22v13H0z" fill="#fbe08d" />
        <path d="M4 9h14v9h-4v-4H8v4H4z" fill="#3eb0dc" />
      </Icon>
    </TaskButton>
    <TaskButton aria-label="Word">
      <OfficeIcon letter="W" color="#2b579a"><path d="M13 5.500h7M13 8.500h7M13 11.500h7M13 14.500h7" stroke="#2b579a" /></OfficeIcon>
    </TaskButton>
    <TaskButton aria-label="Excel">
      <OfficeIcon letter="X" color="#217346"><path d="M13 5.500h7M13 8.500h7M13 11.500h7M13 14.500h7M16.500 3v14" stroke="#217346" /></OfficeIcon>
    </TaskButton>
    <TaskButton $state="active" aria-label="PowerPoint">
      <OfficeIcon letter="P" color="#d24726">
        <circle cx="16" cy="8" r="3" stroke="#d24726" strokeWidth="1.500" />
        <path d="M13 12.500h7M13 14.500h7" stroke="#d24726" />
      </OfficeIcon>
    </TaskButton>
    <TaskButton aria-label="Outlook">
      <OfficeIcon letter="O" color="#0072c6"><path d="M13 7l4 4 5-6" stroke="#0072c6" strokeWidth="1.400" /></OfficeIcon>
    </TaskButton>
    <TaskButton aria-label="Access">
      <OfficeIcon letter="A" color="#a4373a"><path d="M13 6q4 2 8 0M13 9.500q4 2 8 0M13 13q4 2 8 0" stroke="#a4373a" strokeWidth="1.300" /></OfficeIcon>
    </TaskButton>
    <TaskButton $state="open" aria-label="Chrome">
      <Icon w={22} h={22}>
        <circle cx="11" cy="11" r="11" fill="#fbc116" />
        <path d="M11 11L1.500 5.500A11 11 0 0 1 20.500 5.500L21 6z" fill="#e33b2e" />
        <path d="M1.500 5.500A11 11 0 0 0 10 22l5-9-4-2-4 2z" fill="#31a350" />
        <path d="M11 6h9.800A11 11 0 0 0 1.500 5.500L6 13z" fill="#e33b2e" />
        <circle cx="11" cy="11" r="5" fill="#fff" />
        <circle cx="11" cy="11" r="4" fill="#4285f4" />
      </Icon>
    </TaskButton>
    <TaskButton aria-label="Remote Desktop">
      <Icon w={23} h={23}>
        <path d="M1 1l19-1 1 13-14 3z" fill="#c4ccd4" />
        <path d="M3 2.500l15-1 1 10-11 2z" fill="#1836c4" />
        <path d="M11 2l7-.500 1 10-4 .500z" fill="#5f82ee" />
        <path d="M5 19l8-3 5 3-8 3z" fill="#a8b0b8" />
        <circle cx="17" cy="17" r="5.500" fill="#d8e4d8" />
        <path d="M14 15l2.500 2-2.500 2M20 14l-2.500 2 2.500 2" stroke="#478a47" />
      </Icon>
    </TaskButton>
    <TaskButton aria-label="Control Panel">
      <Icon w={21} h={16}>
        <path d="M0 0h21v16H0z" fill="#48b4e4" />
        <path d="M1 1h19v14H1z" stroke="#8ed7f2" />
        <circle cx="6.500" cy="6.500" r="3.500" fill="#d3f0fa" />
        <path d="M6.500 6.500V3a3.500 3.500 0 0 1 3.500 3.500z" fill="#f5a623" />
        <path d="M12 4.500h6M12 7.500h6M4 12.500h3M9 12.500h8" stroke="#fff" strokeWidth="1.400" />
      </Icon>
    </TaskButton>
    <TaskButton aria-label="Command Prompt">
      <Svg width={22} height={18} viewBox="0 0 22 18" aria-hidden="true" fontSize="5">
        <path d="M.500.500h21v17H.500z" fill="#050505" stroke="#aaa" />
        <path d="M1 1.500h20" stroke="#c8c8c8" strokeWidth="2" />
        <text x="2" y="8" fill="#ddd">C:\_</text>
      </Svg>
    </TaskButton>
    <TaskButton $w={40} aria-label="Server Manager">
      <Icon w={18} h={22}>
        <path d="M1 1l12-1v21L1 20z" fill="#b8c6d0" />
        <path d="M13 0l4 2v18l-4 1z" fill="#7e909e" />
        <path d="M3 4h7M3 7h7M3 10h7" stroke="#82929e" />
        <path d="M12 4l4 6H8z" fill="#f7ce28" />
        <circle cx="9" cy="15" r="4" fill="#d73a30" />
        <path d="M7.500 13.500l3 3M10.500 13.500l-3 3" stroke="#fff" />
      </Icon>
    </TaskButton>
    <TaskButton aria-label="Capture">
      <Icon w={22} h={22}>
        <path d="M11 0l10 5.500v11L11 22 1 16.500v-11z" fill="#8e9396" />
        <path d="M11 3l7 4v8l-7 4-7-4V7z" fill="#343a3e" />
        <circle cx="11" cy="11" r="5" fill="#263238" stroke="#bfc6ca" strokeWidth="1.600" />
        <circle cx="11" cy="11" r="2" fill="#7fa2aa" />
      </Icon>
    </TaskButton>
    <TaskButton aria-label="Music app">
      <Icon w={24} h={24}>
        <circle cx="12" cy="12" r="12" fill="#fff" />
        <circle cx="10" cy="14.500" r="4.500" stroke="#b3193a" strokeWidth="3" />
        <path d="M15 3v15M11 8.500h10" stroke="#b3193a" strokeWidth="2.500" />
      </Icon>
    </TaskButton>
    <Spacer />
    <Tray>
      <TaskButton $w={44} aria-label="People">
        <Icon w={15} h={15}>
          <circle cx="10.500" cy="3" r="2.500" stroke="#eee" />
          <circle cx="4.500" cy="7.500" r="2.500" stroke="#eee" />
          <path d="M.500 15c0-7 8-7 8 0M8 8c2-3 6-2 6.500 2" stroke="#eee" />
        </Icon>
      </TaskButton>
      <TaskButton $w={22} aria-label="Show hidden icons">
        <Icon w={12} h={7}><path d="M0 6.500l6-6 6 6" stroke="#eee" strokeWidth="1.200" /></Icon>
      </TaskButton>
      <TaskButton $w={24} aria-label="OneDrive">
        <Icon w={17} h={13}>
          <path d="M2 10C-1 9 0 5 3 5c1-4 7-6 9-1 4 0 4 5 1 6z" fill="#bfc3c6" />
          <circle cx="12" cy="8.500" r="4.500" fill="#d6303a" />
          <path d="M10 6.500l4 4M14 6.500l-4 4" stroke="#fff" />
        </Icon>
      </TaskButton>
      <TaskButton $w={24} aria-label="Network">
        <Icon w={17} h={13}>
          <path d="M5 1.500h11.500v8H3.500V6M.500.500h4v4h-4zM2.500 5v4M9.500 10v2M6 12.500h7" stroke="#eee" />
        </Icon>
      </TaskButton>
      <TaskButton $w={24} aria-label="Volume">
        <Icon w={16} h={13}>
          <path d="M.500 4.500h2l3-3.500v11l-3-3.500h-2zM8 4q2 2.500 0 5M10.500 2.500q3 4 0 8M13 1q4.500 5.500 0 11" stroke="#eee" />
        </Icon>
      </TaskButton>
      <ClockButton $w={122}>G</ClockButton>
      <ActionCenter $w={28} aria-label="Action Center">
        <Icon w={8} h={11}>
          <path d="M0 0h8v9H4l-4 2z" fill="#fff" />
          <path d="M0 3h6M0 6h6" stroke="#222" />
        </Icon>
      </ActionCenter>
      <TrayEnd aria-label="Show desktop" />
    </Tray>
    <Redacted />
    <Badge>1</Badge>
  </Taskbar>
);

export default function PowerPoint() {
  return (
    <App>
      <GlobalStyle />
      <TopBar />
      <RibbonBar />
      <Workspace>
        <SlidesPanel />
        <EditorPanel />
      </Workspace>
      <Status />
      <TaskBar />
    </App>
  );
}
